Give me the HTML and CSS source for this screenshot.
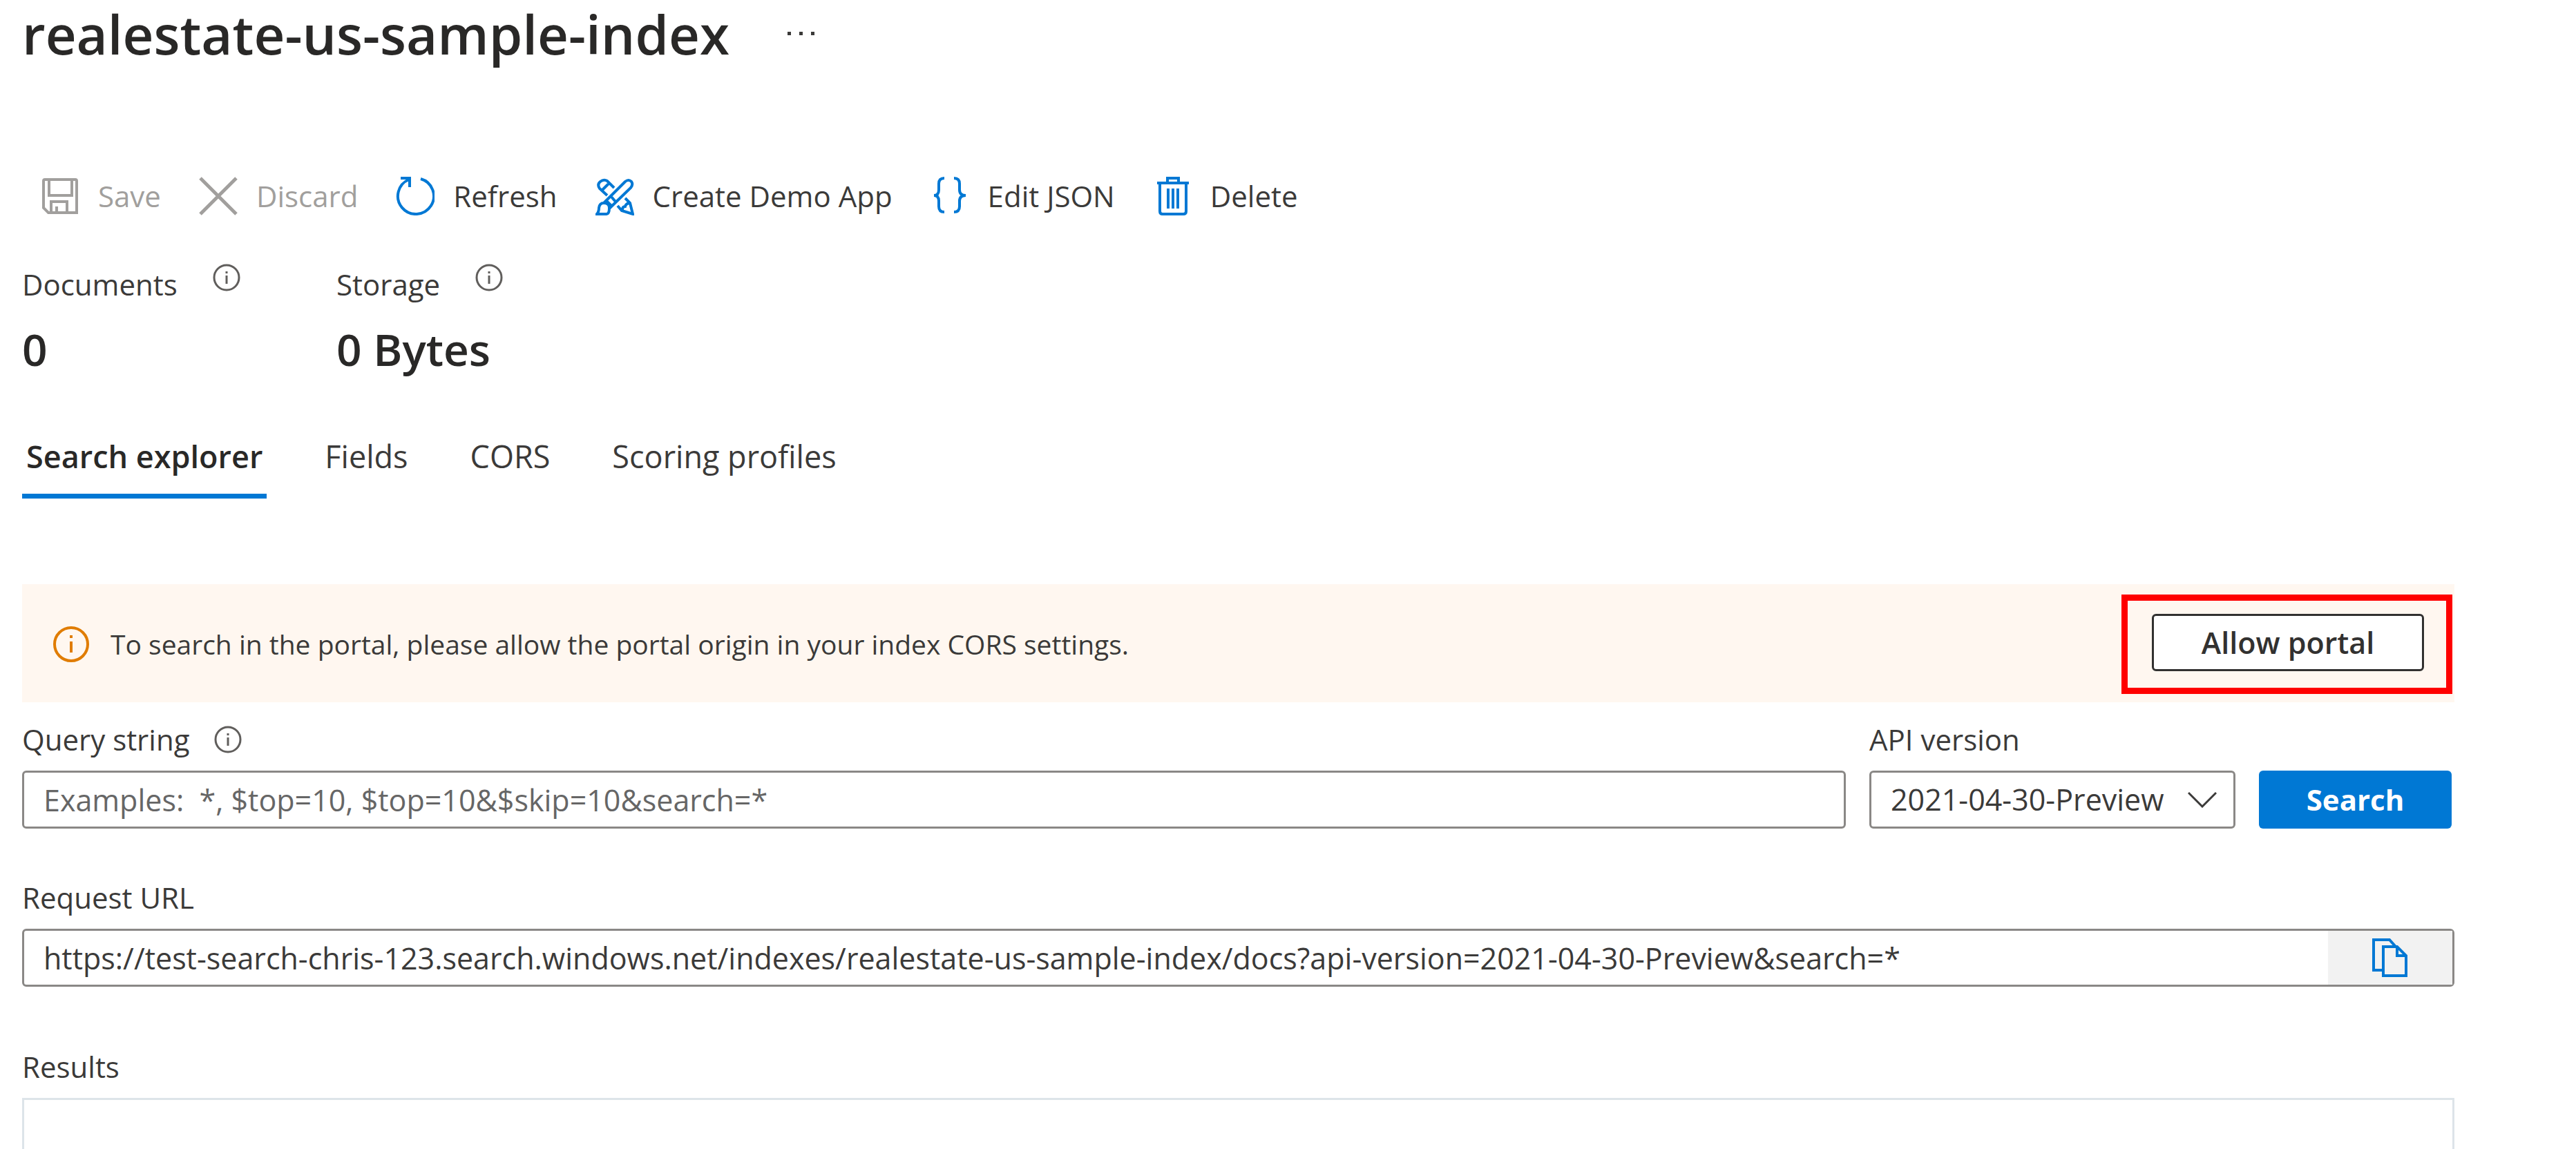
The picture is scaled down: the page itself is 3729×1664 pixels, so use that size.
FILE: index.html
```html
<!DOCTYPE html>
<html lang="en">
<head>
<meta charset="utf-8">
<title>realestate-us-sample-index</title>
<link rel="stylesheet" href="styles.css">
</head>
<body>
<main class="blade">
  <header class="title-row">
    <h1 class="title">realestate-us-sample-index</h1>
    <button class="more" type="button" aria-label="More"><svg width="40" height="6" viewBox="0 0 40 6"><rect x="0" y="0" width="5" height="5"/><rect x="17" y="0" width="5" height="5"/><rect x="34" y="0" width="5" height="5"/></svg></button>
  </header>

  <div class="toolbar" role="toolbar">
    <button class="tool" type="button" disabled>
      <svg class="icon" viewBox="0 0 56 56"><path d="M6 4H50Q52 4 52 6V52H11L4 45V6Q4 4 6 4ZM12 4V27H45V4M15 52V36H38V52M23 52V43"/></svg>Save</button>
    <button class="tool" type="button" disabled>
      <svg class="icon" viewBox="0 0 56 56"><path stroke-width="5" d="M2 2L54 54M54 2L2 54"/></svg>Discard</button>
    <button class="tool" type="button">
      <svg class="icon" viewBox="0 0 56 56"><path d="M36 3A26 26 0 1 1 19 4M7 2H20V15"/></svg>Refresh</button>
    <button class="tool" type="button">
      <svg class="icon" viewBox="0 0 56 56"><path d="M12 38L43 7Q48 3 52 7Q55 11 51 16L20 46M12 38Q20 38 20 45Q20 54 16 54H2Q5 51 5 45Q6 38 12 38M23 29L29 36M16 35L23 42M17 27L6 17Q2 11 7 7Q12 3 17 6L27 16M9 20L20 9M32 42L38 49L54 54L50 38L43 31M39 48Q39 43 43 43Q44 39 49 38"/></svg>Create Demo App</button>
    <button class="tool" type="button">
      <svg class="icon" viewBox="0 0 56 56"><path d="M20 2Q12 2 12 10V19Q12 27 5 27Q12 27 12 35V43Q12 51 20 51M34 2Q42 2 42 10V19Q42 27 51 27Q42 27 42 35V43Q42 51 34 51"/></svg>Edit JSON</button>
    <button class="tool" type="button">
      <svg class="icon" viewBox="0 0 56 56"><path d="M6 9H52M21 9V2H37V9M10 9V50Q10 54 14 54H44Q48 54 48 50V9M22 17V46M29 17V46M36 17V46"/></svg>Delete</button>
  </div>

  <dl class="stats">
    <div class="stat">
      <dt class="stat-label">Documents <svg class="info" viewBox="0 0 40 40"><circle cx="20" cy="20" r="18"/><path d="M20 17V29M20 11V14"/></svg></dt>
      <dd class="stat-value">0</dd>
    </div>
    <div class="stat">
      <dt class="stat-label">Storage <svg class="info" viewBox="0 0 40 40"><circle cx="20" cy="20" r="18"/><path d="M20 17V29M20 11V14"/></svg></dt>
      <dd class="stat-value">0 Bytes</dd>
    </div>
  </dl>

  <div class="tabs" role="tablist">
    <button class="tab tab-active" type="button" role="tab" aria-selected="true">Search explorer</button>
    <button class="tab" type="button" role="tab">Fields</button>
    <button class="tab" type="button" role="tab">CORS</button>
    <button class="tab" type="button" role="tab">Scoring profiles</button>
  </div>

  <section class="banner">
    <svg class="banner-icon" viewBox="0 0 54 54"><circle cx="27" cy="27" r="24"/><path d="M27 23V39M27 14V18"/></svg>
    <p class="banner-text">To search in the portal, please allow the portal origin in your index CORS settings.</p>
    <div class="callout"><button class="allow" type="button">Allow portal</button></div>
  </section>

  <form class="query">
    <div class="field field-grow">
      <div class="label-row"><label class="label" for="q">Query string</label><svg class="info" viewBox="0 0 40 40"><circle cx="20" cy="20" r="18"/><path d="M20 17V29M20 11V14"/></svg></div>
      <input class="box" id="q" type="text" placeholder="Examples:&nbsp; *, $top=10, $top=10&amp;$skip=10&amp;search=*">
    </div>
    <div class="field field-version">
      <div class="label-row"><label class="label" for="v">API version</label></div>
      <div class="select-wrap">
        <select class="box select" id="v"><option>2021-04-30-Preview</option></select>
        <svg class="chevron" viewBox="0 0 42 24"><path d="M1 2L21 22L41 2"/></svg>
      </div>
    </div>
    <button class="search" type="button">Search</button>
  </form>

  <div class="field request">
    <div class="label-row"><label class="label" for="u">Request URL</label></div>
    <div class="url">
      <input class="box url-input" id="u" type="text" readonly value="https://test-search-chris-123.search.windows.net/indexes/realestate-us-sample-index/docs?api-version=2021-04-30-Preview&amp;search=*">
      <button class="copy" type="button" aria-label="Copy"><svg class="icon" viewBox="0 0 56 56"><path d="M17 46H4V2H27L36 12M18 12H38L51 25V54H18ZM38 12V25H51"/></svg></button>
    </div>
  </div>

  <section class="field results">
    <h2 class="label label-row">Results</h2>
    <div class="results-box"></div>
  </section>
</main>
</body>
</html>
```
FILE: styles.css
```css
* { box-sizing: border-box; }

body {
  margin: 0;
  background: #fff;
  color: #3b3a39;
  font: 42px/60px "Open Sans", "Noto Sans", sans-serif;
}

button, input, select { font: inherit; color: inherit; }
button { background: none; border: 0; padding: 0; }
svg { display: block; flex: none; fill: none; stroke: currentColor; }

.blade {
  display: flex;
  flex-direction: column;
  min-height: 100vh;
  padding: 0 176px 0 32px;
}

.title-row { display: flex; align-items: center; gap: 84px; height: 98px; }
.title { margin: 0; font-size: 78px; line-height: 96px; font-weight: 600; color: #292827; }
.more svg { fill: currentColor; stroke: none; }

.toolbar { display: flex; gap: 55px; margin-top: 156px; padding-left: 27px; height: 60px; }
.tool { display: flex; align-items: center; gap: 27px; white-space: nowrap; }
.tool .icon { color: #0078d4; }
.tool:disabled, .tool:disabled .icon { color: #a19f9d; }
.icon { width: 56px; height: 56px; stroke-width: 4; }

.stats { display: flex; margin: 68px 0 0; }
.stat { width: 455px; }
.stat-label { display: flex; align-items: flex-start; gap: 51px; }
.info { width: 40px; height: 40px; color: #605e5c; stroke-width: 3; }
.stat-value { margin: 22px 0 0; font-size: 64px; line-height: 84px; font-weight: 600; color: #292827; }

.tabs { display: flex; gap: 78px; margin-top: 83px; }
.tab { padding: 0 6px 24px; border-bottom: 7px solid transparent; font-size: 45px; line-height: 60px; }
.tab-active { border-color: #0078d4; font-weight: 600; color: #292827; }

.banner {
  display: flex;
  align-items: center;
  margin-top: 124px;
  padding: 15px 3px 12px 44px;
  background: #fff7f0;
}
.banner-icon { width: 54px; height: 54px; color: #e07c00; stroke-width: 4; }
.banner-text { flex: 1; margin: 0 0 0 30px; font-size: 39px; }
.callout { padding: 19px 32px 24px 35px; border: 9px solid #f00; }
.allow { width: 394px; height: 83px; border: 3px solid #323130; border-radius: 6px; background: #fff; font-size: 43px; font-weight: 600; color: #323130; }

.query { display: flex; align-items: flex-end; gap: 34px; margin-top: 24px; }
.field { display: flex; flex-direction: column; }
.field-grow { flex: 1; }
.field-version { width: 530px; }
.label-row { display: flex; align-items: center; gap: 36px; margin: 0 0 15px; }
.label { font-size: 42px; line-height: 60px; font-weight: 400; }
.box { width: 100%; height: 84px; padding: 0 28px; border: 3px solid #8a8886; border-radius: 6px; background: #fff; font-size: 43px; }
.box::placeholder { color: #666; opacity: 1; }
.select-wrap { display: grid; align-items: center; }
.select { grid-area: 1 / 1; appearance: none; }
.chevron { grid-area: 1 / 1; justify-self: end; width: 42px; height: 24px; margin-right: 27px; stroke-width: 3; pointer-events: none; }
.search { width: 279px; height: 84px; margin-right: 4px; border-radius: 6px; background: #0078d4; color: #fff; font-weight: 700; }

.request { margin-top: 70px; }
.url { display: flex; height: 84px; border: 3px solid #8a8886; border-radius: 6px; }
.url-input { flex: 1; height: 78px; border: 0; }
.copy { display: flex; align-items: center; justify-content: center; width: 180px; background: #f2f2f2; color: #0078d4; }

.results { flex: 1; margin-top: 86px; }
.results-box { flex: 1; border: solid #dde4e9; border-width: 3px 3px 0; }
```
